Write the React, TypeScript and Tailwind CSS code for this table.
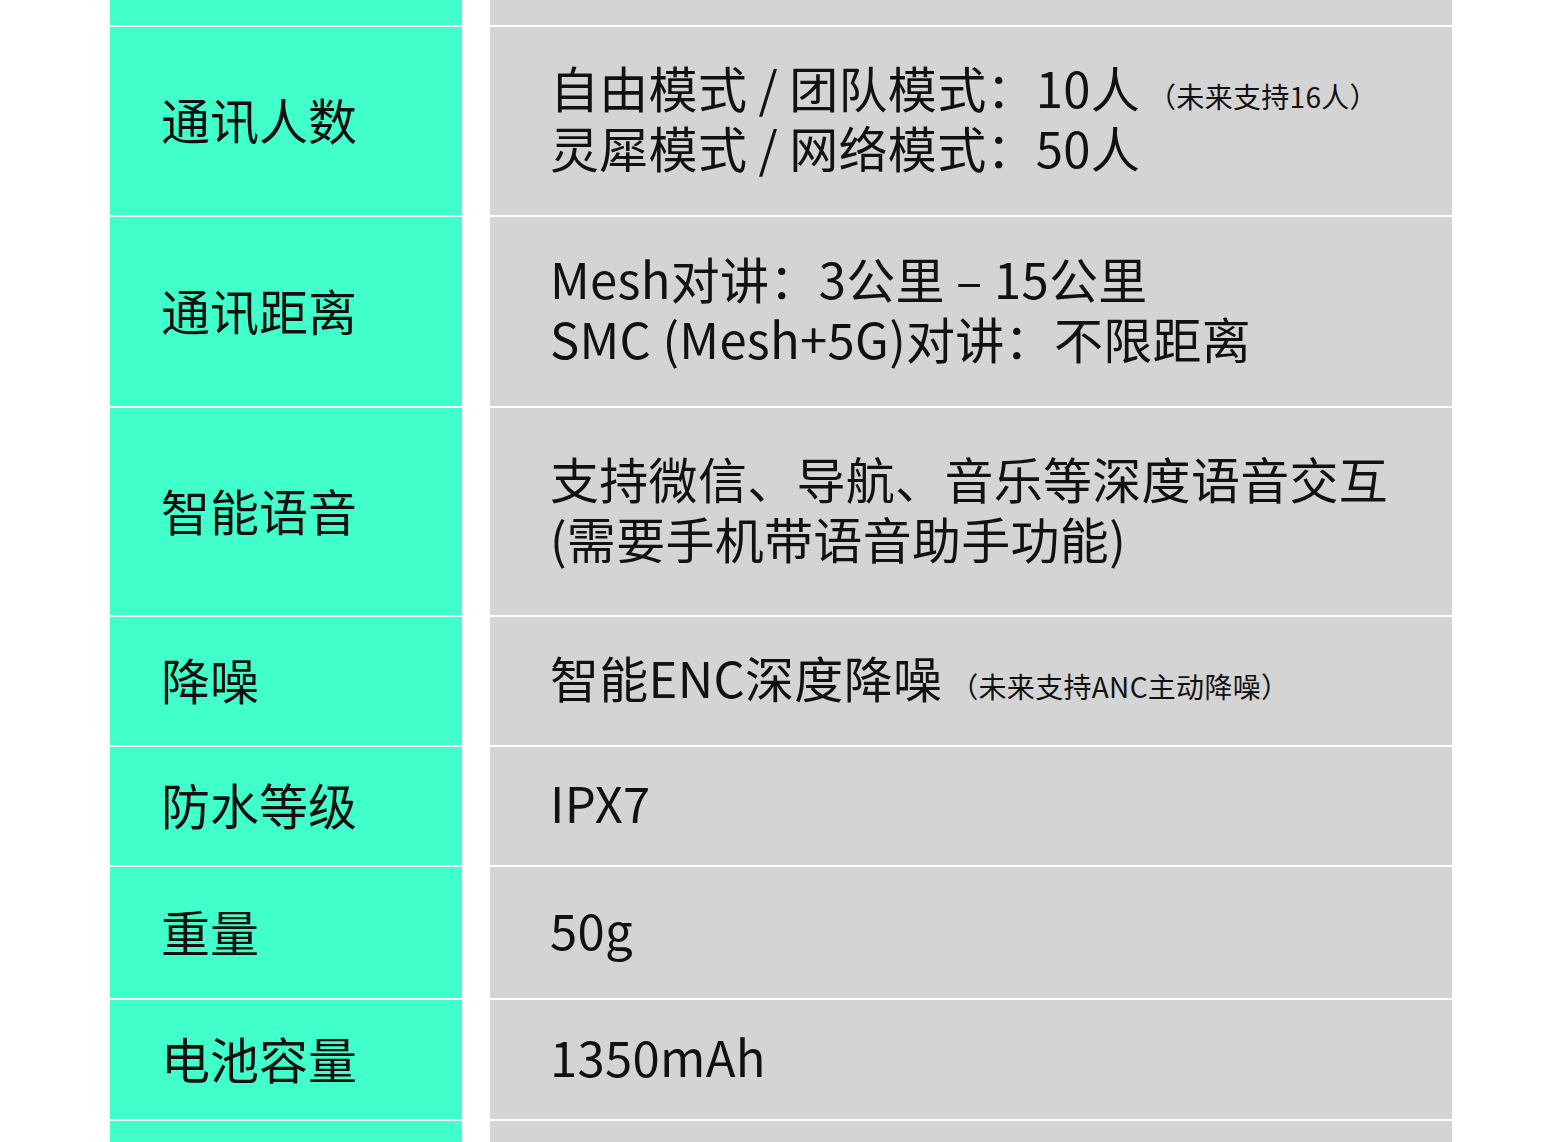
const rows: { h: string; label: string; lines: React.ReactNode[] }[] = [
  {
    h: 'h-[188px]',
    label: '通讯人数',
    lines: [
      <>
        自由模式 / 团队模式：10人
        <span className="ml-[8px] text-[28px] leading-none">（未来支持16人）</span>
      </>,
      '灵犀模式 / 网络模式：50人',
    ],
  },
  {
    h: 'h-[189px]',
    label: '通讯距离',
    lines: ['Mesh对讲：3公里 – 15公里', 'SMC (Mesh+5G)对讲：不限距离'],
  },
  {
    h: 'h-[207px]',
    label: '智能语音',
    lines: ['支持微信、导航、音乐等深度语音交互', '(需要手机带语音助手功能)'],
  },
  {
    h: 'h-[128px]',
    label: '降噪',
    lines: [
      <>
        智能ENC深度降噪
        <span className="ml-[8px] text-[28px] leading-none">（未来支持ANC主动降噪）</span>
      </>,
    ],
  },
  { h: 'h-[118px]', label: '防水等级', lines: ['IPX7'] },
  { h: 'h-[131px]', label: '重量', lines: ['50g'] },
  { h: 'h-[119px]', label: '电池容量', lines: ['1350mAh'] },
];

function Row({ h, label, lines }: { h: string; label?: string; lines?: React.ReactNode[] }) {
  return (
    <div className={`flex gap-[28px] ${h}`}>
      <div className="flex w-[352px] items-center bg-[#40ffca] pb-[4px] pl-[51px] text-[49px] leading-[60px]">
        {label}
      </div>
      <div className="flex w-[962px] flex-col justify-center bg-[#d4d4d4] pb-[8px] pl-[60px] text-[49px] leading-[60px]">
        {lines?.map((l, i) => (
          <div key={i} className="h-[60px] whitespace-nowrap tracking-[0.3px]">
            {l}
          </div>
        ))}
      </div>
    </div>
  );
}

export default function App() {
  return (
    <div
      className="h-[1142px] w-[1563px] overflow-hidden bg-white pl-[110px] text-[#111]"
      style={{ fontFamily: '"Noto Sans CJK SC", "Noto Sans", sans-serif' }}
    >
      <div className="flex flex-col gap-[2px]">
        <Row h="h-[25px]" />
        {rows.map((r) => (
          <Row key={r.label} {...r} />
        ))}
        <Row h="h-[30px]" />
      </div>
    </div>
  );
}
